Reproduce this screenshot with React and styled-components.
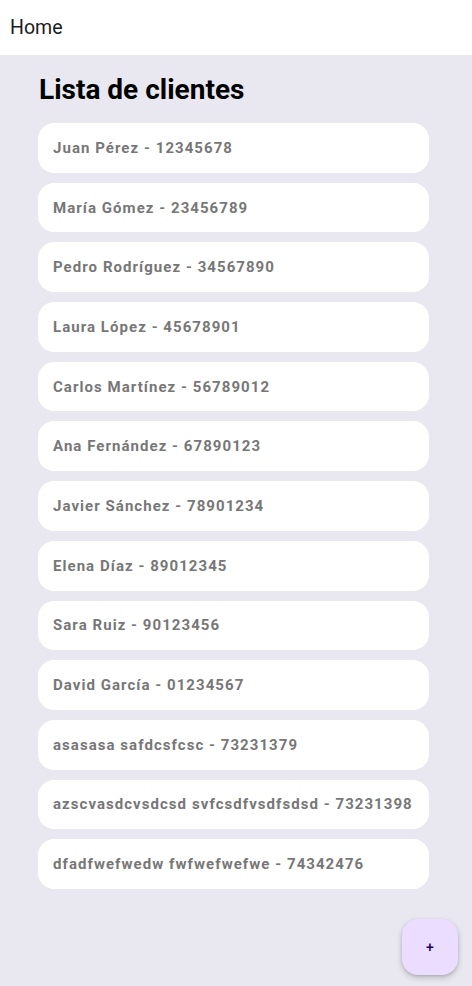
import React from "react";
import styled, { createGlobalStyle } from "styled-components";

const Global = createGlobalStyle`
  html, body { margin: 0; padding: 0; background: #e9e8f0; }
  body { font-family: Roboto, "Noto Sans", sans-serif; }
`;

const Page = styled.div`
  position: relative;
  width: 472px;
  height: 986px;
  background: #e9e8f0;
  overflow: hidden;
`;

const Header = styled.header`
  height: 55px;
  background: #ffffff;
  display: flex;
  align-items: center;
  padding-left: 10px;
  font-size: 19.5px;
  color: #1c1b1f;
`;

const Content = styled.main`
  padding: 18px 0 0 38px;
`;

const Title = styled.h1`
  margin: 0 0 16px 1px;
  font-size: 28px;
  font-weight: 700;
  color: #000;
  line-height: 34px;
`;

const List = styled.ul`
  list-style: none;
  margin: 0;
  padding: 0;
  width: 391px;
  display: flex;
  flex-direction: column;
  gap: 10px;
`;

const Item = styled.li`
  height: 49.7px;
  background: #ffffff;
  border-radius: 16px;
  display: flex;
  align-items: center;
  padding-left: 15px;
  font-size: 15px;
  font-weight: 700;
  color: #777777;
  letter-spacing: 1.05px;
  white-space: nowrap;
`;

const Fab = styled.button`
  position: absolute;
  right: 14px;
  bottom: 11px;
  width: 56px;
  height: 56px;
  border: none;
  border-radius: 16px;
  background: #eaddff;
  color: #21005d;
  font-family: Roboto, sans-serif;
  font-size: 14px;
  font-weight: 500;
  box-shadow: 0 3px 6px rgba(0, 0, 0, 0.18), 0 1px 3px rgba(0, 0, 0, 0.12);
  display: flex;
  align-items: center;
  justify-content: center;
`;

const clients = [
  "Juan Pérez - 12345678",
  "María Gómez - 23456789",
  "Pedro Rodríguez - 34567890",
  "Laura López - 45678901",
  "Carlos Martínez - 56789012",
  "Ana Fernández - 67890123",
  "Javier Sánchez - 78901234",
  "Elena Díaz - 89012345",
  "Sara Ruiz - 90123456",
  "David García - 01234567",
  "asasasa safdcsfcsc - 73231379",
  "azscvasdcvsdcsd svfcsdfvsdfsdsd - 73231398",
  "dfadfwefwedw fwfwefwefwe - 74342476",
];

export default function App() {
  return (
    <>
      <Global />
      <Page>
        <Header>Home</Header>
        <Content>
          <Title>Lista de clientes</Title>
          <List>
            {clients.map((c) => (
              <Item key={c}>{c}</Item>
            ))}
          </List>
        </Content>
        <Fab>+</Fab>
      </Page>
    </>
  );
}
